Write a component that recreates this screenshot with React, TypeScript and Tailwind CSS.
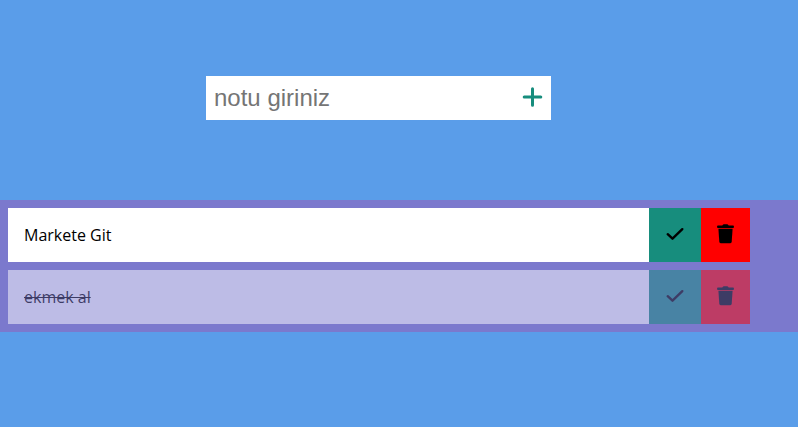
import { useState } from "react";

type Note = { id: number; text: string; done: boolean };

const initialNotes: Note[] = [
  { id: 1, text: "Markete Git", done: false },
  { id: 2, text: "ekmek al", done: true },
];

function PlusIcon() {
  return (
    <svg viewBox="0 0 21 24" className="h-6 w-[21px]" fill="none" stroke="currentColor" strokeWidth="3" strokeLinecap="round" aria-hidden="true">
      <path d="M10.500 3.700v16.600M2.200 12h16.600" />
    </svg>
  );
}

function CheckIcon() {
  return (
    <svg viewBox="0 0 20 20" className="h-5 w-5" fill="none" stroke="currentColor" strokeWidth="2.400" strokeLinecap="round" strokeLinejoin="round" aria-hidden="true">
      <path d="M2.700 10.200L7.500 14.700L17.300 5.200" />
    </svg>
  );
}

function TrashIcon() {
  return (
    <svg viewBox="0 0 17 20" className="h-5 w-[17px] fill-current" aria-hidden="true">
      <path d="M.9 1.500h4.400l.6-.8Q6.200.3 6.700.3h3.600q.5 0 .8.400l.6.800h4.400q.8 0 .8.800v.9q0 .7-.8.700H.9q-.8 0-.8-.7v-.9q0-.8.800-.8z" />
      <path d="M1.400 4.700h14.200l-.9 13.100q-.1 1.400-1.400 1.400H3.700q-1.300 0-1.400-1.400z" />
    </svg>
  );
}

export default function App() {
  const [notes, setNotes] = useState(initialNotes);
  const [draft, setDraft] = useState("");

  const addNote = () => {
    if (!draft.trim()) return;
    setNotes([...notes, { id: Date.now(), text: draft, done: false }]);
    setDraft("");
  };

  return (
    <main className="min-h-screen bg-[#5a9de9] pt-[76px] font-['Open_Sans',sans-serif] text-base text-black">
      <form
        className="mx-auto flex w-fit pr-[41px]"
        onSubmit={(event) => {
          event.preventDefault();
          addNote();
        }}
      >
        <input
          aria-label="notu giriniz"
          placeholder="notu giriniz"
          value={draft}
          onChange={(event) => setDraft(event.target.value)}
          className="h-11 w-[308px] bg-white px-2 font-['Liberation_Sans',Arial,sans-serif] text-2xl outline-none placeholder:text-[#757575]"
        />
        <button type="submit" aria-label="Ekle" className="flex h-11 w-[37px] items-center justify-center bg-white pb-0.5 text-[#178d7d]">
          <PlusIcon />
        </button>
      </form>
      <ul className="mt-20 flex flex-col gap-2 bg-[#7b79cd] py-2 pr-12 pl-2">
        {notes.map((note) => (
          <li key={note.id} className={`flex h-[54px] bg-white ${note.done ? "opacity-50" : ""}`}>
            <span className={`flex-1 px-4 py-[15px] leading-6 ${note.done ? "line-through" : ""}`}>{note.text}</span>
            <button
              type="button"
              aria-label="Tamamla"
              className="flex w-[52px] items-center justify-center bg-[#178d7d] pb-0.5"
              onClick={() => setNotes(notes.map((n) => (n.id === note.id ? { ...n, done: !n.done } : n)))}
            >
              <CheckIcon />
            </button>
            <button
              type="button"
              aria-label="Sil"
              className="flex w-[49px] items-center justify-center bg-[#ff0000] pb-0.5"
              onClick={() => setNotes(notes.filter((n) => n.id !== note.id))}
            >
              <TrashIcon />
            </button>
          </li>
        ))}
      </ul>
    </main>
  );
}
